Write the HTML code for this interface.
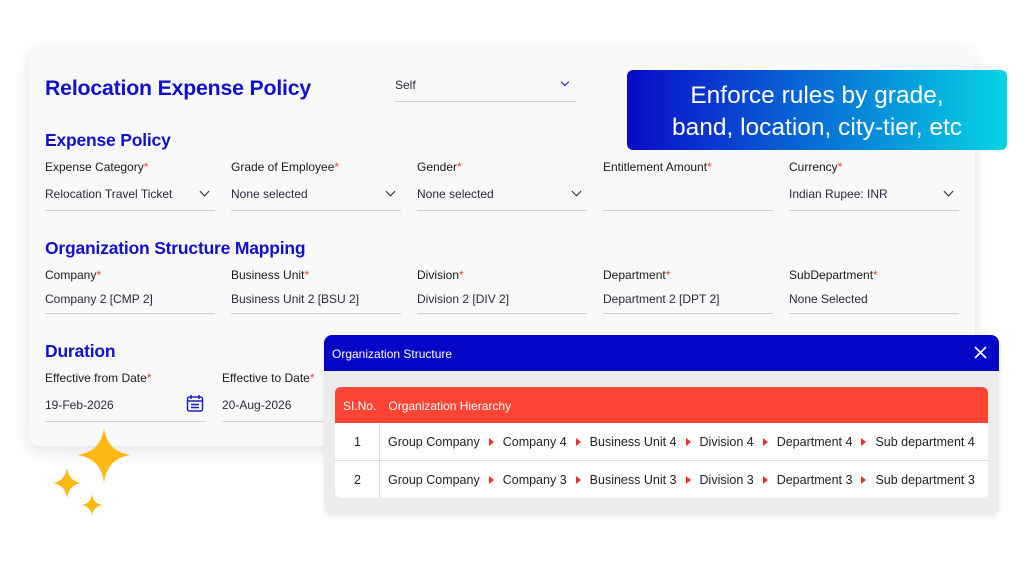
<!DOCTYPE html>
<html><head><meta charset="utf-8"><style>
*{margin:0;padding:0;box-sizing:border-box}
body{width:1024px;height:574px;background:#fff;position:relative;overflow:hidden;font-family:"Liberation Sans",sans-serif;color:#1e1e2e}
.card{position:absolute;left:29px;top:49px;width:946px;height:397px;background:#f9f9fa;border-radius:10px;box-shadow:0 4px 16px rgba(0,0,0,.12)}
.a{position:absolute;white-space:nowrap}
.h1{font-size:21.3px;color:#1010d0;font-weight:bold;letter-spacing:-.2px}
.h2{font-size:17.5px;color:#1010d0;font-weight:bold;letter-spacing:-.2px}
.lbl{font-size:12px;color:#1a1a1a}
.lbl i{color:#f04030;font-style:normal}
.val{font-size:12px;color:#2a2a3e}
.ul{position:absolute;height:1px;background:#d4d4d8}
.chev{position:absolute;width:7px;height:7px;border-right:1.6px solid #222;border-bottom:1.6px solid #222;transform:rotate(45deg)}
.banner{position:absolute;left:627px;top:70px;width:380px;height:80px;border-radius:6px;background:linear-gradient(90deg,#0a0ac8,#05d4e4);color:#fff;font-size:24.5px;text-align:center;line-height:32px;padding-top:10px}
.modal{position:absolute;left:324px;top:335px;width:675px;height:180px;background:#ececec;border-radius:8px;overflow:hidden;box-shadow:0 2px 6px rgba(0,0,0,.08)}
.mh{height:36px;background:#0505c8;color:#fff;font-size:12px;line-height:38px;padding-left:8px}
.tbl{position:absolute;left:11px;top:52px;width:653px;height:111px;background:#fff;border-radius:6px;overflow:hidden}
.th{height:36px;background:#ff4433;color:#fff;font-size:12px;line-height:38px}
.row{position:absolute;left:0;width:653px;height:38px;font-size:12.5px;line-height:38px;color:#222}
.tri{display:inline-block;width:0;height:0;border-left:5px solid #f03020;border-top:4px solid transparent;border-bottom:4px solid transparent;margin:0 9px 0 9px;vertical-align:0px}
</style></head><body>
<div class="card"></div>
<div class="a h1" style="left:45px;top:76px">Relocation Expense Policy</div>
<div class="a val" style="left:395px;top:78px">Self</div>
<div class="chev" style="left:562px;top:79px;width:6px;height:6px;border-color:#1010d0"></div>
<div class="ul" style="left:395px;top:101px;width:181px"></div>

<div class="a h2" style="left:45px;top:130px">Expense Policy</div>
<div class="a lbl" style="left:45px;top:160px">Expense Category<i>*</i></div>
<div class="a lbl" style="left:231px;top:160px">Grade of Employee<i>*</i></div>
<div class="a lbl" style="left:417px;top:160px">Gender<i>*</i></div>
<div class="a lbl" style="left:603px;top:160px">Entitlement Amount<i>*</i></div>
<div class="a lbl" style="left:789px;top:160px">Currency<i>*</i></div>
<div class="a val" style="left:45px;top:187px">Relocation Travel Ticket</div>
<div class="a val" style="left:231px;top:187px">None selected</div>
<div class="a val" style="left:417px;top:187px">None selected</div>
<div class="a val" style="left:789px;top:187px">Indian Rupee: INR</div>
<div class="chev" style="left:201px;top:188px"></div>
<div class="chev" style="left:387px;top:188px"></div>
<div class="chev" style="left:573px;top:188px"></div>
<div class="chev" style="left:945px;top:188px"></div>
<div class="ul" style="left:45px;top:210px;width:170px"></div>
<div class="ul" style="left:231px;top:210px;width:170px"></div>
<div class="ul" style="left:417px;top:210px;width:170px"></div>
<div class="ul" style="left:603px;top:210px;width:170px"></div>
<div class="ul" style="left:789px;top:210px;width:170px"></div>

<div class="a h2" style="left:45px;top:238px">Organization Structure Mapping</div>
<div class="a lbl" style="left:45px;top:268px">Company<i>*</i></div>
<div class="a lbl" style="left:231px;top:268px">Business Unit<i>*</i></div>
<div class="a lbl" style="left:417px;top:268px">Division<i>*</i></div>
<div class="a lbl" style="left:603px;top:268px">Department<i>*</i></div>
<div class="a lbl" style="left:789px;top:268px">SubDepartment<i>*</i></div>
<div class="a val" style="left:45px;top:292px">Company 2 [CMP 2]</div>
<div class="a val" style="left:231px;top:292px">Business Unit 2 [BSU 2]</div>
<div class="a val" style="left:417px;top:292px">Division 2 [DIV 2]</div>
<div class="a val" style="left:603px;top:292px">Department 2 [DPT 2]</div>
<div class="a val" style="left:789px;top:292px">None Selected</div>
<div class="ul" style="left:45px;top:313px;width:170px"></div>
<div class="ul" style="left:231px;top:313px;width:170px"></div>
<div class="ul" style="left:417px;top:313px;width:170px"></div>
<div class="ul" style="left:603px;top:313px;width:170px"></div>
<div class="ul" style="left:789px;top:313px;width:170px"></div>

<div class="a h2" style="left:45px;top:341px">Duration</div>
<div class="a lbl" style="left:45px;top:371px">Effective from Date<i>*</i></div>
<div class="a lbl" style="left:222px;top:371px">Effective to Date<i>*</i></div>
<div class="a val" style="left:45px;top:398px">19-Feb-2026</div>
<div class="a val" style="left:222px;top:398px">20-Aug-2026</div>
<svg class="a" style="left:186px;top:394px" width="18" height="19" viewBox="0 0 18 19" fill="none" stroke="#2020c8" stroke-width="1.5"><rect x="1.5" y="3" width="15" height="14" rx="2"/><path d="M1.5 7h15M5 1v4M13 1v4M5 10.5h8M5 13.5h8"/></svg>
<div class="ul" style="left:45px;top:421px;width:161px"></div>
<div class="ul" style="left:222px;top:421px;width:110px"></div>

<svg class="a" style="left:50px;top:428px" width="85" height="92" viewBox="0 0 85 92" fill="#fdb813">
<path d="M54 0 Q57 24 81 27 Q57 30 54 55 Q51 30 27 27 Q51 24 54 0Z"/>
<path d="M17 40 Q19 53 31 55 Q19 57 17 70 Q15 57 3 55 Q15 53 17 40Z"/>
<path d="M42 66 Q43 75 52 77 Q43 79 42 88 Q41 79 32 77 Q41 75 42 66Z"/>
</svg>

<div class="banner">Enforce rules by grade,<br>band, location, city-tier, etc</div>

<div class="modal">
<div class="mh">Organization Structure</div>
<svg class="a" style="left:650px;top:11px" width="13" height="13" viewBox="0 0 13 13" stroke="#fff" stroke-width="1.6"><path d="M1 1L12 12M12 1L1 12"/></svg>
<div class="tbl">
<div class="th"><span style="margin-left:8px">SI.No.</span><span style="margin-left:12px">Organization Hierarchy</span></div>
<div style="position:absolute;left:44px;top:36px;width:1px;height:75px;background:#ddd"></div>
<div class="row" style="top:36px;border-bottom:1px solid #ddd"><span style="position:absolute;left:19px">1</span><span style="position:absolute;left:53px">Group Company<span class="tri"></span>Company 4<span class="tri"></span>Business Unit 4<span class="tri"></span>Division 4<span class="tri"></span>Department 4<span class="tri"></span>Sub department 4</span></div>
<div class="row" style="top:74px"><span style="position:absolute;left:19px">2</span><span style="position:absolute;left:53px">Group Company<span class="tri"></span>Company 3<span class="tri"></span>Business Unit 3<span class="tri"></span>Division 3<span class="tri"></span>Department 3<span class="tri"></span>Sub department 3</span></div>
</div>
</div>
</body></html>
